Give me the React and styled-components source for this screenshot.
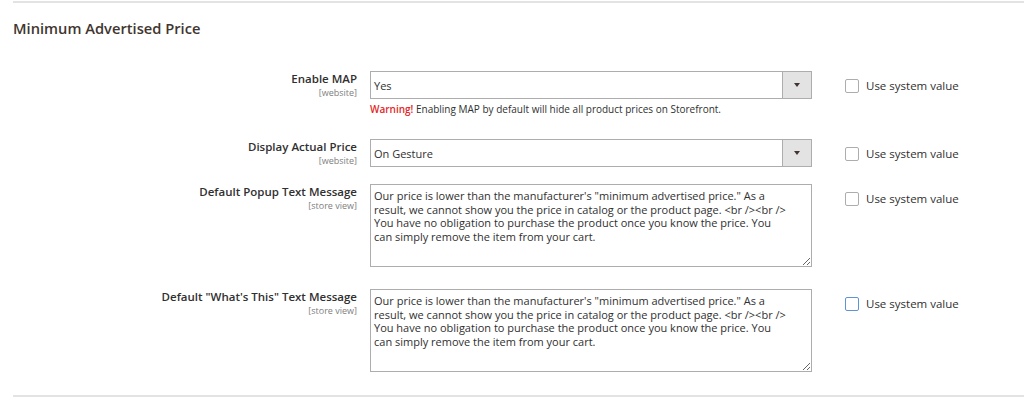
import React from 'react'
import styled, { createGlobalStyle } from 'styled-components'

const GlobalStyle = createGlobalStyle`
  body {
    margin: 0;
    background: #fff;
    font-family: 'Open Sans', 'Liberation Sans', sans-serif;
    color: #303030;
  }
`

const Page = styled.div`
  padding: 1px 0 0 13px;
`

const Rule = styled.div`
  border-top: 2px solid #e3e3e3;
`

const Title = styled.h2`
  margin: 0;
  padding-top: 15px;
  font: 600 14.7px/20px 'Open Sans', sans-serif;
  color: #41362f;
`

const Fields = styled.div`
  margin-top: 33px;
`

const Row = styled.div`
  display: grid;
  grid-template-columns: 344px 442px 1fr;
  column-gap: 13px;
  align-items: start;
  padding-bottom: ${p => p.$space}px;
`

const LabelBox = styled.div`
  text-align: right;
`

const Label = styled.div`
  font: 600 11.5px/16px 'Open Sans', sans-serif;
  color: #303030;
`

const Scope = styled.div`
  font: 9px/11px 'Open Sans', sans-serif;
  color: #808080;
`

const Select = styled.div`
  height: 28px;
  box-sizing: border-box;
  border: 1px solid #adadad;
  display: flex;
  align-items: stretch;
  background: #fff;
`

const SelectValue = styled.div`
  flex: 1;
  display: flex;
  align-items: center;
  padding-left: 3px;
  font: 11px 'Open Sans', sans-serif;
  color: #303030;
`

const SelectArrow = styled.div`
  width: 28px;
  background: #e3e3e3;
  border-left: 1px solid #adadad;
  display: flex;
  align-items: center;
  justify-content: center;
  &::after {
    content: '';
    border-left: 3px solid transparent;
    border-right: 3px solid transparent;
    border-top: 4px solid #41362f;
  }
`

const Note = styled.div`
  margin-top: 3px;
  font: 10px/14px 'Open Sans', sans-serif;
  color: #303030;
  strong {
    color: #e22626;
    font-weight: 600;
  }
`

const TextArea = styled.textarea`
  display: block;
  width: 442px;
  height: 83px;
  box-sizing: border-box;
  margin: 0;
  border: 1px solid #adadad;
  border-radius: 0;
  padding: 4px 3px;
  font: 11px/13.5px 'Open Sans', sans-serif;
  color: #303030;
  outline: none;
  resize: vertical;
`

const SystemValue = styled.label`
  display: flex;
  align-items: center;
  gap: 7px;
  margin-left: 20px;
  padding-top: 8px;
  font: 11.5px/14px 'Open Sans', sans-serif;
  color: #303030;
`

const Check = styled.span`
  width: 14px;
  height: 14px;
  box-sizing: border-box;
  border: 1px solid ${p => (p.$focus ? '#5f93d8' : '#adadad')};
  border-radius: 2px;
  background: #fff;
`

const message =
  'Our price is lower than the manufacturer\'s "minimum advertised price." As a\n' +
  'result, we cannot show you the price in catalog or the product page. <br /><br />\n' +
  'You have no obligation to purchase the product once you know the price. You\n' +
  'can simply remove the item from your cart.'

const Field = ({ label, scope, space, focus, children }) => (
  <Row $space={space}>
    <LabelBox>
      <Label>{label}</Label>
      <Scope>[{scope}]</Scope>
    </LabelBox>
    <div>{children}</div>
    <SystemValue>
      <Check $focus={focus} />
      Use system value
    </SystemValue>
  </Row>
)

export default function App() {
  return (
    <Page>
      <GlobalStyle />
      <Rule />
      <Title>Minimum Advertised Price</Title>
      <Fields>
        <Field label="Enable MAP" scope="website" space={23}>
          <Select>
            <SelectValue>Yes</SelectValue>
            <SelectArrow />
          </Select>
          <Note>
            <strong>Warning!</strong> Enabling MAP by default will hide all product prices on Storefront.
          </Note>
        </Field>
        <Field label="Display Actual Price" scope="website" space={17}>
          <Select>
            <SelectValue>On Gesture</SelectValue>
            <SelectArrow />
          </Select>
        </Field>
        <Field label="Default Popup Text Message" scope="store view" space={22}>
          <TextArea defaultValue={message} />
        </Field>
        <Field label={'Default "What\'s This" Text Message'} scope="store view" space={23} focus>
          <TextArea defaultValue={message} />
        </Field>
      </Fields>
      <Rule />
    </Page>
  )
}
